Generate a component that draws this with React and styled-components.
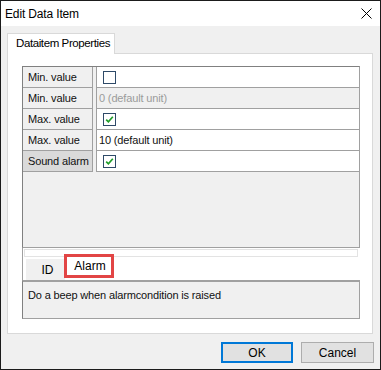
import React from 'react';
import styled, { createGlobalStyle } from 'styled-components';

const GlobalStyle = createGlobalStyle`
  html, body { margin: 0; padding: 0; overflow: hidden; background: #fff; }
  * { box-sizing: border-box; }
`

const Window = styled.div`
  width: 381px;
  height: 370px;
  border: 1px solid #1b1b1b;
  background: #f0f0f0;
  display: flex;
  flex-direction: column;
  font-family: "Liberation Sans", Arial, sans-serif;
  font-size: 12px;
  color: #000;
`

const TitleBar = styled.div`
  height: 25px;
  background: #fff;
  display: flex;
  align-items: center;
  justify-content: space-between;
  padding: 0 8px 0 4px;
  font-size: 12px;
  letter-spacing: -0.15px;
`

const Body = styled.div`
  flex: 1;
  display: flex;
  flex-direction: column;
  padding: 7px 7px 6px 6px;
`

const TabHeader = styled.div`
  display: flex;
`

const TabButton = styled.div`
  width: 108px;
  height: 21px;
  background: #fff;
  border: 1px solid #d9d9d9;
  border-bottom: none;
  padding: 3px 0 0 8px;
  font-size: 11.5px;
  letter-spacing: -0.4px;
  margin-bottom: -1px;
  position: relative;
  z-index: 1;
`

const TabPage = styled.div`
  height: 281px;
  background: #fff;
  border: 1px solid #d9d9d9;
  padding: 12px 12px 14px 14px;
  display: flex;
  flex-direction: column;
`

const Grid = styled.div`
  height: 182px;
  background: #f0f0f0;
  border: 1px solid #a0a0a0;
  border-top-color: #808080;
  border-left-color: #808080;
  font-size: 11px;
  letter-spacing: -0.15px;
`

const Row = styled.div`
  display: flex;
  height: 21px;
`

const Label = styled.div`
  width: 70px;
  padding: 4px 0 0 5px;
  background: ${p => (p.$selected ? '#dadada' : '#f0f0f0')};
  border-right: 1px solid #a0a0a0;
  border-bottom: 1px solid #a0a0a0;
  color: #111;
  white-space: nowrap;
`

const Gap = styled.div`
  width: 4px;
  background: #f0f0f0;
  border-right: 1px solid #a0a0a0;
`

const Value = styled.div`
  flex: 1;
  display: flex;
  align-items: center;
  padding-left: ${p => (p.$check ? '6px' : '2px')};
  background: ${p => (p.$disabled ? '#f0f0f0' : '#fff')};
  color: ${p => (p.$disabled ? '#9b9b9b' : '#111')};
  border-bottom: 1px solid #a0a0a0;
`

const Box = styled.span`
  width: 13px;
  height: 13px;
  border: 1px solid #2e4a68;
  background: #fff;
  display: inline-flex;
  align-items: center;
  justify-content: center;
`

const Strip = styled.div`
  height: 9px;
  background: #fff;
  border-left: 1px solid #a0a0a0;
  padding: 1px 1px 0 1px;
  display: flex;
`

const StripBox = styled.div`
  flex: 1;
  border: 1px solid #e3e3e3;
  margin-right: 1px;
`

const TabStrip = styled.div`
  height: 23px;
  background: #fff;
  border-left: 1px solid #a0a0a0;
  display: flex;
  padding: 2px 0 0 3px;
  font-size: 12px;
`

const SubTab = styled.div`
  position: relative;
  width: ${p => p.$w}px;
  background: ${p => (p.$active ? '#fff' : '#f0f0f0')};
  text-align: center;
  padding-top: ${p => (p.$active ? '0px' : '4px')};
  padding-left: ${p => (p.$active ? '2px' : '4px')};
`

const Highlight = styled.div`
  position: absolute;
  left: -1px;
  top: -5px;
  width: 50px;
  height: 24px;
  border: 3px solid #e24545;
`

const Description = styled.div`
  height: 39px;
  background: #f0f0f0;
  border: 1px solid #a0a0a0;
  border-top: 2px solid #a0a0a0;
  border-left-color: #808080;
  padding: 7px 0 0 5px;
  font-size: 11px;
  letter-spacing: -0.15px;
  color: #111;
`

const Buttons = styled.div`
  display: flex;
  justify-content: flex-end;
  gap: 8px;
  margin-top: 8px;
  margin-right: -1px;
`

const Button = styled.div`
  width: ${p => p.$w}px;
  height: 21px;
  background: #e1e1e1;
  border: ${p => (p.$default ? '2px solid #0078d7' : '1px solid #adadad')};
  display: flex;
  align-items: center;
  justify-content: center;
  font-size: 12px;
`

const Check = ({ checked }) => (
  <Box>
    {checked && (
      <svg width="11" height="11" viewBox="0 0 11 11">
        <path d="M2.2 5.6 L4.4 7.8 L8.8 2.8" fill="none" stroke="#1f9e28" strokeWidth="1.7" />
      </svg>
    )}
  </Box>
)

const rows = [
  { label: 'Min. value', check: true, checked: false },
  { label: 'Min. value', text: '0 (default unit)', disabled: true },
  { label: 'Max. value', check: true, checked: true },
  { label: 'Max. value', text: '10 (default unit)' },
  { label: 'Sound alarm', check: true, checked: true, selected: true },
]

export default function App() {
  return (
    <>
      <GlobalStyle />
      <Window>
        <TitleBar>
          <span>Edit Data Item</span>
          <svg width="11" height="11" viewBox="0 0 11 11">
            <path d="M0.5 0.5 L10.5 10.5 M10.5 0.5 L0.5 10.5" stroke="#000" strokeWidth="1" />
          </svg>
        </TitleBar>
        <Body>
          <TabHeader>
            <TabButton>Dataitem Properties</TabButton>
          </TabHeader>
          <TabPage>
            <Grid>
              {rows.map((r, i) => (
                <Row key={i}>
                  <Label $selected={r.selected}>{r.label}</Label>
                  <Gap />
                  <Value $check={r.check} $disabled={r.disabled}>
                    {r.check ? <Check checked={r.checked} /> : r.text}
                  </Value>
                </Row>
              ))}
            </Grid>
            <Strip><StripBox /></Strip>
            <TabStrip>
              <SubTab $w={39}>ID</SubTab>
              <SubTab $w={48} $active>
                Alarm
                <Highlight />
              </SubTab>
            </TabStrip>
            <Description>Do a beep when alarmcondition is raised</Description>
          </TabPage>
          <Buttons>
            <Button $w={72} $default>OK</Button>
            <Button $w={73}>Cancel</Button>
          </Buttons>
        </Body>
      </Window>
    </>
  )
}
